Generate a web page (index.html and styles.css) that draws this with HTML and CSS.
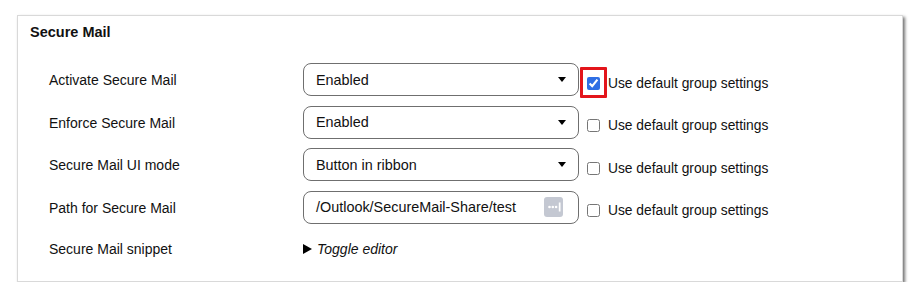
FILE: index.html
```html
<!DOCTYPE html>
<html lang="en">
<head>
  <meta charset="UTF-8">
  <meta name="viewport" content="width=device-width, initial-scale=1.0">
  <title>Secure Mail</title>
  <link rel="stylesheet" href="styles.css">
</head>
<body>
  <div class="panel">
    <h2>Secure Mail</h2>
    <div class="settings">
      <div class="label">Activate Secure Mail</div>
      <div class="field select">
        <span>Enabled</span>
        <svg class="caret" width="8" height="5" viewBox="0 0 8 5"><path d="M0 0h8L4 5z"/></svg>
      </div>
      <label class="inherit">
        <span class="box-wrap">
          <input type="checkbox" checked>
          <span class="highlight"></span>
        </span>
        Use default group settings
      </label>

      <div class="label">Enforce Secure Mail</div>
      <div class="field select">
        <span>Enabled</span>
        <svg class="caret" width="8" height="5" viewBox="0 0 8 5"><path d="M0 0h8L4 5z"/></svg>
      </div>
      <label class="inherit">
        <span class="box-wrap"><input type="checkbox"></span>
        Use default group settings
      </label>

      <div class="label">Secure Mail UI mode</div>
      <div class="field select">
        <span>Button in ribbon</span>
        <svg class="caret" width="8" height="5" viewBox="0 0 8 5"><path d="M0 0h8L4 5z"/></svg>
      </div>
      <label class="inherit">
        <span class="box-wrap"><input type="checkbox"></span>
        Use default group settings
      </label>

      <div class="label">Path for Secure Mail</div>
      <div class="field path">
        <span>/Outlook/SecureMail-Share/test</span>
        <span class="browse">
          <svg width="14" height="10" viewBox="0 0 14 10">
            <circle cx="2.5" cy="5" r="1.3" fill="#fff"/>
            <circle cx="5.8" cy="5" r="1.3" fill="#fff"/>
            <circle cx="9.1" cy="5" r="1.3" fill="#fff"/>
            <rect x="11.8" y="0.5" width="1.7" height="9" fill="#fff"/>
          </svg>
        </span>
      </div>
      <label class="inherit">
        <span class="box-wrap"><input type="checkbox"></span>
        Use default group settings
      </label>

      <div class="label snippet">Secure Mail snippet</div>
      <div class="toggle snippet">
        <svg class="arrow" width="9" height="10" viewBox="0 0 9 10"><path d="M0 0L9 5L0 10z"/></svg>
        <em>Toggle editor</em>
      </div>
    </div>
  </div>
</body>
</html>
```

FILE: styles.css
```css
body {
  margin: 0;
  padding: 15px 0 0 17px;
  background-color: #fff;
  font-family: "Liberation Sans", Arial, sans-serif;
  color: #111;
}

.panel {
  width: 884px;
  height: 265px;
  border: 1px solid #d9d9d9;
  box-shadow: 2px 2px 3px rgba(0, 0, 0, 0.55);
  background-color: #fff;
  box-sizing: content-box;
}

h2 {
  margin: 0;
  padding: 7px 0 0 12px;
  font-size: 14.5px;
  font-weight: bold;
  line-height: 18px;
}

.settings {
  display: grid;
  grid-template-columns: 254px 276px auto;
  grid-auto-rows: 33px;
  row-gap: 9.5px;
  padding: 22px 0 0 31px;
  font-size: 14px;
}

.label {
  display: flex;
  align-items: center;
  padding-top: 1px;
}

.field {
  display: flex;
  align-items: center;
  justify-content: space-between;
  border: 1px solid #6f6f6f;
  border-radius: 8px;
  padding: 0 12px 0 12px;
  box-sizing: border-box;
  height: 33px;
  font-size: 14.4px;
}

.path {
  padding-right: 15px;
}

.browse {
  display: flex;
  align-items: center;
  justify-content: center;
  width: 19px;
  height: 20px;
  border-radius: 3px;
  background-color: #c4c8d2;
}

.inherit {
  display: flex;
  align-items: center;
  padding-top: 7px;
  font-size: 13.8px;
}

.box-wrap {
  position: relative;
  display: flex;
  width: 13px;
  height: 13px;
  margin: 0 8px 0 8px;
}

.box-wrap input {
  width: 13px;
  height: 13px;
  margin: 0;
  accent-color: #2f6fe4;
}

.highlight {
  position: absolute;
  left: -7px;
  top: -10px;
  width: 21px;
  height: 25px;
  border: 3px solid #e3151b;
  border-radius: 1px;
}

.toggle {
  display: flex;
  align-items: center;
  padding-top: 1px;
}

.label.snippet,
.toggle.snippet {
  height: 30px;
}

.arrow {
  margin-right: 5px;
}
```
